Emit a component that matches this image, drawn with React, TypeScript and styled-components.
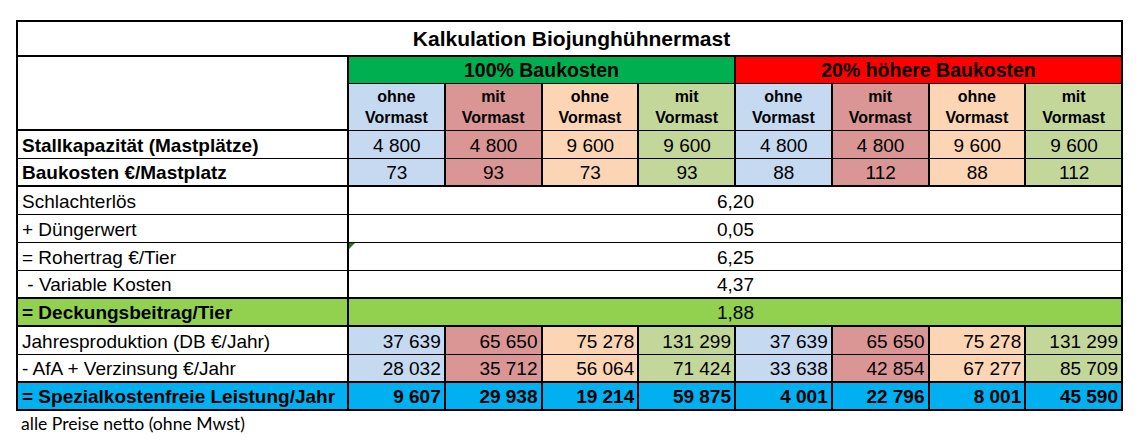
import React from "react";
import styled, { createGlobalStyle } from "styled-components";

const GlobalStyle = createGlobalStyle`
  html, body { margin: 0; padding: 0; background: #ffffff; }
  body { font-family: "Liberation Sans", Arial, sans-serif; color: #000; }
`;

const palette: Record<string, string> = {
  none: "#ffffff",
  blue: "#C5D9F1",
  rose: "#DA9694",
  peach: "#FCD5B4",
  olive: "#C4D79B",
  green: "#00B050",
  red: "#FF0000",
  lime: "#92D050",
  cyan: "#00B0F0",
};

type Align = "left" | "center" | "right";

const Page = styled.div`
  padding: 20px 0 0 16px;
`;

const Sheet = styled.div`
  display: grid;
  width: 1107px;
  box-sizing: border-box;
  border-left: 2px solid #000;
  border-top: 2px solid #000;
  grid-template-columns: 331px repeat(8, 1fr);
  grid-template-rows: 35px 27px 47px repeat(10, 28px);
`;

const Cell = styled.div<{
  $span?: number;
  $rows?: number;
  $bg?: string;
  $align?: Align;
  $bold?: boolean;
  $bb?: number;
  $middle?: boolean;
}>`
  position: relative;
  box-sizing: border-box;
  display: flex;
  min-width: 0;
  align-items: ${(p) => (p.$middle ? "center" : "flex-end")};
  justify-content: ${(p) =>
    p.$align === "center" ? "center" : p.$align === "right" ? "flex-end" : "flex-start"};
  grid-column: span ${(p) => p.$span ?? 1};
  grid-row: span ${(p) => p.$rows ?? 1};
  padding: 0 3px 1px 4px;
  white-space: pre;
  font-size: 19px;
  line-height: 22px;
  font-weight: ${(p) => (p.$bold ? 700 : 400)};
  background: ${(p) => palette[p.$bg ?? "none"]};
  border-right: 2px solid #000;
  border-bottom: ${(p) => p.$bb ?? 1}px solid #000;
`;

const Title = styled(Cell)`
  font-size: 21px;
  line-height: 24px;
  padding: 0 0 0 4px;
`;

const GroupHead = styled(Cell)`
  font-size: 19.5px;
  padding: 0;
`;

const SubHead = styled(Cell)`
  flex-direction: column;
  align-items: center;
  justify-content: center;
  font-size: 16px;
  line-height: 21px;
  padding: 0;
`;

const ErrorMark = styled.span`
  position: absolute;
  left: 0;
  top: 0;
  width: 0;
  height: 0;
  border-top: 6px solid #1f7a1f;
  border-right: 6px solid transparent;
`;

const Footnote = styled.div`
  font-family: Lato, "Open Sans", sans-serif;
  font-size: 17.6px;
  line-height: 20px;
  padding: 3px 0 0 5px;
`;

const tones = ["blue", "rose", "peach", "olive", "blue", "rose", "peach", "olive"];
const kinds = ["ohne", "mit", "ohne", "mit", "ohne", "mit", "ohne", "mit"];

type Row = {
  label: string;
  bold?: boolean;
  boldValues?: boolean;
  bb: number;
  bg?: string;
  values?: string[];
  merged?: string;
  align?: Align;
  mark?: boolean;
};

const rows: Row[] = [
  {
    label: "Stallkapazität (Mastplätze)",
    bold: true,
    bb: 1,
    align: "center",
    values: ["4 800", "4 800", "9 600", "9 600", "4 800", "4 800", "9 600", "9 600"],
  },
  {
    label: "Baukosten €/Mastplatz",
    bold: true,
    bb: 2,
    align: "center",
    values: ["73", "93", "73", "93", "88", "112", "88", "112"],
  },
  { label: "Schlachterlös", bb: 1, merged: "6,20" },
  { label: "+ Düngerwert", bb: 1, merged: "0,05" },
  { label: "= Rohertrag €/Tier", bb: 1, merged: "6,25", mark: true },
  { label: " - Variable Kosten", bb: 2, merged: "4,37" },
  { label: "= Deckungsbeitrag/Tier", bold: true, bb: 2, merged: "1,88", bg: "lime" },
  {
    label: "Jahresproduktion (DB €/Jahr)",
    bb: 1,
    align: "right",
    values: ["37 639", "65 650", "75 278", "131 299", "37 639", "65 650", "75 278", "131 299"],
  },
  {
    label: "- AfA + Verzinsung €/Jahr",
    bb: 2,
    align: "right",
    values: ["28 032", "35 712", "56 064", "71 424", "33 638", "42 854", "67 277", "85 709"],
  },
  {
    label: "= Spezialkostenfreie Leistung/Jahr",
    bold: true,
    boldValues: true,
    bb: 2,
    bg: "cyan",
    align: "right",
    values: ["9 607", "29 938", "19 214", "59 875", "4 001", "22 796", "8 001", "45 590"],
  },
];

export default function App() {
  return (
    <>
      <GlobalStyle />
      <Page>
        <Sheet>
          <Title $span={9} $bb={2} $bold $align="center" $middle>
            Kalkulation Biojunghühnermast
          </Title>

          <Cell $rows={2} $bb={2} />
          <GroupHead $span={4} $bg="green" $bold $align="center" $middle>
            100% Baukosten
          </GroupHead>
          <GroupHead $span={4} $bg="red" $bold $align="center" $middle>
            20% höhere Baukosten
          </GroupHead>
          {kinds.map((k, i) => (
            <SubHead key={i} $bg={tones[i]} $bold>
              <span>{k}</span>
              <span>Vormast</span>
            </SubHead>
          ))}

          {rows.map((r, ri) => (
            <React.Fragment key={ri}>
              <Cell $bb={r.bb} $bold={r.bold} $bg={r.bg}>
                {r.label}
              </Cell>
              {r.merged !== undefined ? (
                <Cell $span={8} $bb={r.bb} $bg={r.bg} $align="center">
                  {r.mark && <ErrorMark />}
                  {r.merged}
                </Cell>
              ) : (
                r.values!.map((v, i) => (
                  <Cell
                    key={i}
                    $bb={r.bb}
                    $bold={r.boldValues}
                    $bg={r.bg ?? tones[i]}
                    $align={r.align}
                  >
                    {v}
                  </Cell>
                ))
              )}
            </React.Fragment>
          ))}
        </Sheet>
        <Footnote>alle Preise netto (ohne Mwst)</Footnote>
      </Page>
    </>
  );
}
